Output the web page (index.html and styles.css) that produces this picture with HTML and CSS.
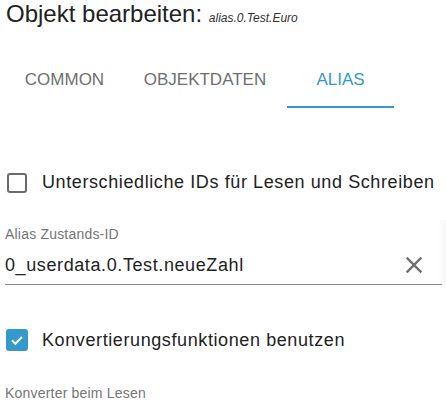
FILE: index.html
```html
<!DOCTYPE html>
<html>
<head>
<meta charset="utf-8">
<link rel="stylesheet" href="styles.css">
</head>
<body>
<div class="dialog">
  <h1 class="title">Objekt bearbeiten: <span class="subtitle">alias.0.Test.Euro</span></h1>
  <div class="tabs">
    <div class="tab tab-common">COMMON</div>
    <div class="tab tab-data">OBJEKTDATEN</div>
    <div class="tab tab-alias active">ALIAS</div>
  </div>
  <div class="content">
    <label class="check-row row-ids">
      <span class="box"></span>
      <span class="check-label">Unterschiedliche IDs für Lesen und Schreiben</span>
    </label>
    <div class="field">
      <div class="field-label">Alias Zustands-ID</div>
      <div class="input">
        <span class="input-value">0_userdata.0.Test.neueZahl</span>
        <svg class="clear" width="28" height="28" viewBox="0 0 24 24"><path d="M19 6.41 17.59 5 12 10.59 6.41 5 5 6.41 10.59 12 5 17.59 6.41 19 12 13.41 17.59 19 19 17.59 13.41 12z" fill="#707070"/></svg>
      </div>
    </div>
    <label class="check-row row-conv">
      <span class="box checked"><svg width="16" height="16" viewBox="0 0 24 24"><path d="M4.5 12.5l5 5 10-10" fill="none" stroke="#fff" stroke-width="3.2"/></svg></span>
      <span class="check-label">Konvertierungsfunktionen benutzen</span>
    </label>
    <div class="field-label conv-label">Konverter beim Lesen</div>
  </div>
  <div class="edge-shadow"></div>
</div>
</body>
</html>
```
FILE: styles.css
```css
html, body {
  margin: 0;
  padding: 0;
  background: #fff;
}
body {
  font-family: "Liberation Sans", Arial, sans-serif;
  color: #212121;
  width: 446px;
  height: 411px;
  overflow: hidden;
}
.dialog {
  position: relative;
  height: 411px;
}
.title {
  margin: 0;
  padding: 0 0 0 6px;
  font-weight: normal;
  font-size: 24px;
  line-height: 28px;
  height: 30px;
  color: #222;
}
.subtitle {
  font-size: 12px;
  font-style: italic;
  color: #333;
}
.tabs {
  display: flex;
  padding-left: 6px;
  margin-top: 30px;
  height: 48px;
}
.tab {
  display: flex;
  align-items: center;
  justify-content: center;
  font-size: 17px;
  color: #6f6f6f;
  box-sizing: border-box;
  padding-bottom: 6px;
  border-bottom: 2px solid transparent;
}
.tab-common { width: 117px; }
.tab-data { width: 164px; }
.tab-alias { width: 107px; }
.tab.active {
  color: #3399cc;
  border-bottom-color: #3399cc;
}
.content {
  padding: 0 4px 0 5px;
}
.check-row {
  display: flex;
  align-items: center;
  gap: 15px;
  font-size: 18px;
  letter-spacing: 0.6px;
  color: #222;
}
.row-ids {
  margin-top: 64px;
  padding-left: 2px;
}
.box {
  width: 20px;
  height: 20px;
  box-sizing: border-box;
  border: 2.5px solid #6b6b6b;
  border-radius: 3px;
  display: flex;
  align-items: center;
  justify-content: center;
}
.box.checked {
  width: 22px;
  height: 22px;
  background: #3399cc;
  border: none;
}
.field {
  margin-top: 33px;
}
.field-label {
  font-size: 14px;
  letter-spacing: 0.2px;
  color: #757575;
}
.input {
  display: flex;
  align-items: center;
  justify-content: space-between;
  border-bottom: 1px solid #8a8a8a;
  height: 38px;
  margin-top: 4px;
  font-size: 18px;
  letter-spacing: 0.6px;
  color: #222;
}
.input .clear {
  margin-right: 14px;
}
.row-conv {
  margin-top: 44px;
  padding-left: 1px;
  gap: 14px;
}
.conv-label {
  margin-top: 34px;
}
.edge-shadow {
  position: absolute;
  right: 0;
  top: 220px;
  width: 8px;
  height: 65px;
  background: linear-gradient(to right, rgba(0,0,0,0), rgba(0,0,0,0.035));
}
```
